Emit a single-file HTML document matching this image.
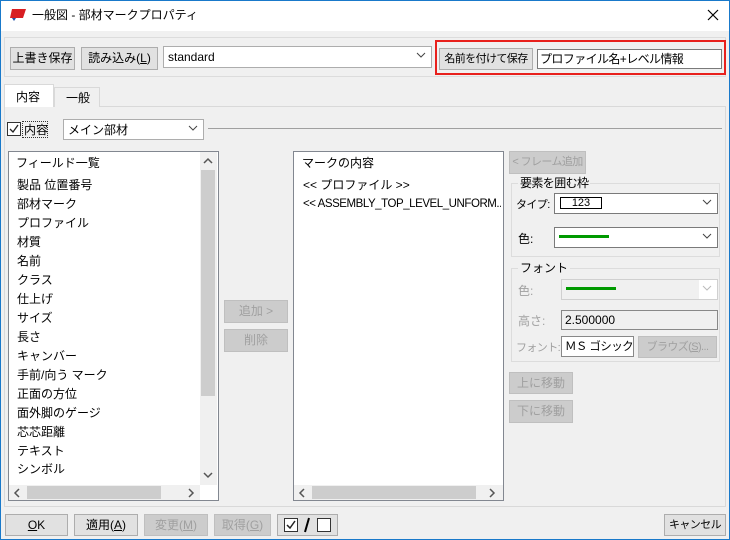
<!DOCTYPE html>
<html><head><meta charset="utf-8"><style>
*{box-sizing:border-box;margin:0;padding:0}
body{width:730px;height:540px;background:#f0f0f0;font-family:"Liberation Sans","Noto Sans CJK JP",sans-serif;font-size:12px;color:#000;position:relative;overflow:hidden}
.a{position:absolute}
.btn{position:absolute;background:#e1e1e1;border:1px solid #adadad;text-align:center;line-height:20px;font-size:12px;white-space:nowrap;overflow:hidden}
.dis{color:#a0a0a0;background:#cccccc;border-color:#bfbfbf}
.box{position:absolute;background:#fff;border:1px solid #7a7a7a;overflow:hidden}
.grp{position:absolute;border:1px solid #dcdcdc}
.lbl{position:absolute;background:#f0f0f0;padding:0 2px;line-height:14px}
.chev{position:absolute;right:5px;top:3px;width:10px;height:10px}
.t{position:absolute;white-space:nowrap;line-height:14px}
.n{font-size:11px;letter-spacing:-0.6px}
</style></head><body>
<div class="a" style="left:0;top:0;width:730px;height:540px;border:1px solid #1979ca;border-top:none"></div>
<div class="a" style="left:0;top:0;width:730px;height:31px;background:#fff;border:1px solid #1979ca;border-bottom:none"></div>
<svg class="a" style="left:9px;top:7px" width="18" height="16"><polygon points="3,2 17,2 14,11 1,11" fill="#d81e22"/><polygon points="3,11 7,11 5,14" fill="#1f4fa6"/></svg>
<div class="t" style="left:32px;top:8px">一般図 - 部材マークプロパティ</div>
<svg class="a" style="left:707px;top:9px" width="12" height="12"><path d="M1 1L11 11M11 1L1 11" stroke="#000" stroke-width="1.2"/></svg>

<div class="grp" style="left:4px;top:37px;width:722px;height:40px"></div>
<div class="btn" style="left:10px;top:47px;width:65px;height:23px">上書き保存</div>
<div class="btn" style="left:81px;top:47px;width:77px;height:23px">読み込み(<u>L</u>)</div>
<div class="box" style="left:163px;top:46px;width:269px;height:22px;border-color:#adadad"><span class="t" style="left:4px;top:3px">standard</span><svg class="chev" viewBox="0 0 10 10"><path d="M1 3L5 7L9 3" stroke="#444" fill="none"/></svg></div>
<div class="a" style="left:435px;top:40px;width:291px;height:35px;border:2px solid #e8201c"></div>
<div class="btn n" style="left:439px;top:48px;width:94px;height:22px">名前を付けて保存</div>
<div class="box" style="left:537px;top:49px;width:185px;height:20px"><span class="t n" style="left:2px;top:2px;font-size:12px">プロファイル名+レベル情報</span></div>

<div class="a" style="left:4px;top:106px;width:722px;height:401px;border:1px solid #d9d9d9;background:#f0f0f0"></div>
<div class="a" style="left:54px;top:87px;width:46px;height:20px;border:1px solid #d9d9d9;border-bottom:none;background:#f0f0f0"><span class="t" style="left:11px;top:3px">一般</span></div>
<div class="a" style="left:4px;top:84px;width:50px;height:23px;border:1px solid #d9d9d9;border-bottom:none;background:#fff"><span class="t" style="left:11px;top:5px">内容</span></div>

<div class="a" style="left:7px;top:122px;width:14px;height:14px;border:1px solid #333;background:#fff"></div>
<svg class="a" style="left:8px;top:123px" width="12" height="12"><path d="M2 6L5 9L10 2" stroke="#222" fill="none" stroke-width="1.3"/></svg>
<div class="a" style="left:22px;top:121px;width:26px;height:17px;border:1px dotted #333"><span class="t" style="left:1px;top:1px">内容</span></div>
<div class="box" style="left:63px;top:119px;width:141px;height:21px;border-color:#adadad"><span class="t" style="left:4px;top:3px">メイン部材</span><svg class="chev" viewBox="0 0 10 10"><path d="M1 3L5 7L9 3" stroke="#444" fill="none"/></svg></div>
<div class="a" style="left:208px;top:128px;width:514px;height:1px;background:#a0a0a0"></div>

<div class="box" style="left:8px;top:151px;width:211px;height:350px;border-color:#828790"></div>
<div class="a" style="left:200px;top:152px;width:17px;height:333px;background:#f0f0f0"></div>
<div class="a" style="left:201px;top:170px;width:14px;height:226px;background:#cdcdcd"></div>
<svg class="a" style="left:202px;top:156px" width="12" height="10"><path d="M2 7L6 3L10 7" stroke="#555" fill="none" stroke-width="1.5"/></svg>
<svg class="a" style="left:202px;top:470px" width="12" height="10"><path d="M2 3L6 7L10 3" stroke="#555" fill="none" stroke-width="1.5"/></svg>
<div class="a" style="left:9px;top:485px;width:191px;height:15px;background:#f0f0f0"></div>
<div class="a" style="left:27px;top:486px;width:134px;height:13px;background:#cdcdcd"></div>
<svg class="a" style="left:12px;top:487px" width="10" height="12"><path d="M7 2L3 6L7 10" stroke="#555" fill="none" stroke-width="1.5"/></svg>
<svg class="a" style="left:186px;top:487px" width="10" height="12"><path d="M3 2L7 6L3 10" stroke="#555" fill="none" stroke-width="1.5"/></svg>
<div class="t" style="left:16px;top:156px">フィールド一覧</div>
<div class="t" style="left:17px;top:178px">製品 位置番号</div>
<div class="t" style="left:17px;top:197px">部材マーク</div>
<div class="t" style="left:17px;top:216px">プロファイル</div>
<div class="t" style="left:17px;top:235px">材質</div>
<div class="t" style="left:17px;top:254px">名前</div>
<div class="t" style="left:17px;top:273px">クラス</div>
<div class="t" style="left:17px;top:292px">仕上げ</div>
<div class="t" style="left:17px;top:311px">サイズ</div>
<div class="t" style="left:17px;top:330px">長さ</div>
<div class="t" style="left:17px;top:349px">キャンバー</div>
<div class="t" style="left:17px;top:368px">手前/向う マーク</div>
<div class="t" style="left:17px;top:387px">正面の方位</div>
<div class="t" style="left:17px;top:406px">面外脚のゲージ</div>
<div class="t" style="left:17px;top:425px">芯芯距離</div>
<div class="t" style="left:17px;top:444px">テキスト</div>
<div class="t" style="left:17px;top:462px">シンボル</div>

<div class="btn dis" style="left:224px;top:300px;width:64px;height:23px">追加 &gt;</div>
<div class="btn dis" style="left:224px;top:329px;width:64px;height:23px">削除</div>

<div class="box" style="left:293px;top:151px;width:211px;height:350px;border-color:#828790"></div>
<div class="a" style="left:294px;top:485px;width:209px;height:15px;background:#f0f0f0"></div>
<div class="a" style="left:312px;top:486px;width:164px;height:13px;background:#cdcdcd"></div>
<svg class="a" style="left:297px;top:487px" width="10" height="12"><path d="M7 2L3 6L7 10" stroke="#555" fill="none" stroke-width="1.5"/></svg>
<svg class="a" style="left:487px;top:487px" width="10" height="12"><path d="M3 2L7 6L3 10" stroke="#555" fill="none" stroke-width="1.5"/></svg>
<div class="t" style="left:302px;top:156px">マークの内容</div>
<div class="t" style="left:303px;top:178px">&lt;&lt; プロファイル &gt;&gt;</div>
<div class="t" style="left:303px;top:197px;font-size:11.5px;letter-spacing:-0.45px;width:198px;overflow:hidden">&lt;&lt; ASSEMBLY_TOP_LEVEL_UNFORM..</div>

<div class="btn dis n" style="left:509px;top:151px;width:77px;height:23px">&lt; フレーム追加</div>
<div class="grp" style="left:511px;top:183px;width:209px;height:74px"></div>
<div class="lbl n" style="left:518px;top:176px;font-size:12px">要素を囲む枠</div>
<div class="t n" style="left:516px;top:198px">タイプ:</div>
<div class="box" style="left:554px;top:193px;width:164px;height:21px"><div class="a" style="left:5px;top:3px;width:42px;height:12px;border:1px solid #000;font-size:11px;line-height:10px;text-align:center">123</div><svg class="chev" viewBox="0 0 10 10"><path d="M1 3L5 7L9 3" stroke="#444" fill="none"/></svg></div>
<div class="t" style="left:518px;top:232px">色:</div>
<div class="box" style="left:554px;top:227px;width:164px;height:21px"><div class="a" style="left:4px;top:7px;width:50px;height:3px;background:#009a00"></div><svg class="chev" viewBox="0 0 10 10"><path d="M1 3L5 7L9 3" stroke="#444" fill="none"/></svg></div>

<div class="grp" style="left:511px;top:268px;width:209px;height:94px"></div>
<div class="lbl" style="left:518px;top:261px">フォント</div>
<div class="t" style="left:518px;top:284px;color:#a0a0a0">色:</div>
<div class="box" style="left:561px;top:279px;width:157px;height:21px;border-color:#d0d0d0;background:#f0f0f0"><div class="a" style="left:4px;top:7px;width:50px;height:3px;background:#009a00"></div><div class="a" style="right:0;top:0;width:18px;height:19px;background:#fff"></div><svg class="chev" viewBox="0 0 10 10"><path d="M1 3L5 7L9 3" stroke="#bbb" fill="none"/></svg></div>
<div class="t" style="left:518px;top:314px;color:#a0a0a0">高さ:</div>
<div class="box" style="left:561px;top:310px;width:157px;height:20px;border-color:#888;background:#f0f0f0"><span class="t" style="left:3px;top:2px">2.500000</span></div>
<div class="t n" style="left:516px;top:341px;color:#a0a0a0">フォント:</div>
<div class="box" style="left:561px;top:336px;width:73px;height:21px;border-color:#888"><span class="t n" style="left:3px;top:3px;font-size:11.5px">ＭＳ ゴシック</span></div>
<div class="btn dis n" style="left:638px;top:336px;width:79px;height:22px">ブラウズ(<u>S</u>)...</div>

<div class="btn dis" style="left:509px;top:372px;width:64px;height:22px">上に移動</div>
<div class="btn dis" style="left:509px;top:400px;width:64px;height:23px">下に移動</div>

<div class="btn" style="left:5px;top:514px;width:63px;height:22px"><u>O</u>K</div>
<div class="btn" style="left:74px;top:514px;width:64px;height:22px">適用(<u>A</u>)</div>
<div class="btn dis" style="left:144px;top:514px;width:64px;height:22px">変更(<u>M</u>)</div>
<div class="btn dis" style="left:214px;top:514px;width:57px;height:22px">取得(<u>G</u>)</div>
<div class="btn" style="left:277px;top:514px;width:61px;height:22px"></div>
<div class="a" style="left:284px;top:518px;width:14px;height:14px;border:1px solid #333;background:#fff"></div>
<svg class="a" style="left:285px;top:519px" width="12" height="12"><path d="M2 6L5 9L10 2" stroke="#222" fill="none" stroke-width="1.5"/></svg>
<svg class="a" style="left:302px;top:516px" width="10" height="18"><path d="M7 2L3 16" stroke="#000" stroke-width="2"/></svg>
<div class="a" style="left:317px;top:518px;width:14px;height:14px;border:1px solid #333;background:#fff"></div>
<div class="btn n" style="left:664px;top:514px;width:62px;height:22px">キャンセル</div>
</body></html>
